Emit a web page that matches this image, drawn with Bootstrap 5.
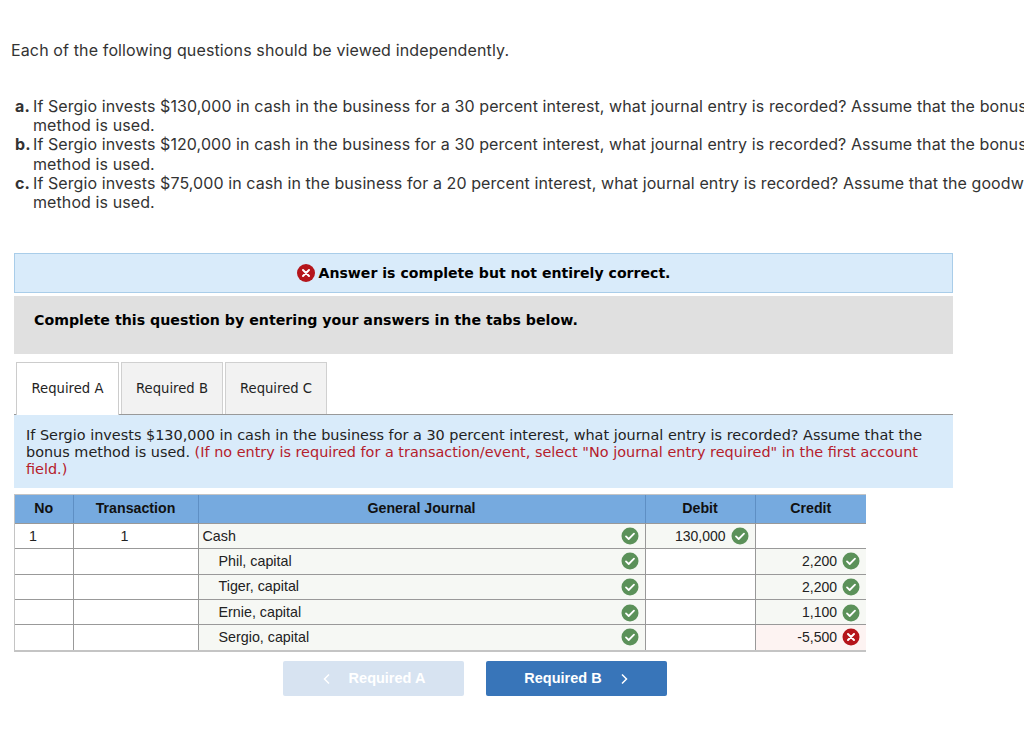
<!DOCTYPE html>
<html lang="en">
<head>
<meta charset="utf-8">
<title>Journal entry question</title>
<link href="https://cdn.jsdelivr.net/npm/bootstrap@5.3.0/dist/css/bootstrap.min.css" rel="stylesheet">
<style>
html,body{width:1024px;height:754px;overflow:hidden;background:#fff}
.page-wrap{width:1024px;height:754px;overflow:hidden;padding:40px 0 0 0}
.lead-line{font-family:Inter,"Open Sans",sans-serif;font-size:16px;line-height:21px;color:#333;margin:0 0 0 11px;letter-spacing:.13px}
.q-list{font-family:Inter,"Open Sans",sans-serif;font-size:16px;line-height:19.2px;color:#333;width:1100px;margin:36px 0 0 15px;letter-spacing:.09px}
.q-item{display:flex}
.q-let{width:18px;flex:none;font-weight:700;text-align:left}
.q-txt{white-space:nowrap}
.sect{width:939px;margin-left:14px}
.ans-alert{height:40px;margin-top:41px;background:#d9ebfa;border:1px solid #a9cde9;font-family:"DejaVu Sans",sans-serif;font-weight:700;font-size:14.1px;color:#000}
.ans-alert svg{margin-right:4px}
.grey-box{height:58px;margin-top:3px;background:#e0e0e0;padding:14px 20px;font-family:"DejaVu Sans",sans-serif;font-weight:700;font-size:14.2px;color:#000;line-height:20px}
.tabs-row{margin-top:8px;height:53px;border-bottom:1px solid #999;padding-left:2px;gap:2px}
.tab-item{width:103px;height:52px;background:#f2f2f2;border:1px solid #d0d0d0;border-bottom:0;font-family:"DejaVu Sans",sans-serif;font-size:13.2px;color:#222}
.tab-item.on{background:#fff;height:53px;border-color:#ccc}
.tab-item.w2{width:102px}
.q-panel{height:73px;background:#d9ebfa;padding:12px 12px 0;font-family:"DejaVu Sans",sans-serif;font-size:14.43px;line-height:17px;color:#222}
.q-red{color:#b5202b}
.gj-wrap{width:852px;margin:6px 0 0 14px;border:1px solid #c4c4c4;padding:0}
.gj{width:851px;table-layout:fixed;border-collapse:collapse;margin:0;font-family:"Liberation Sans",sans-serif;font-size:14.3px;color:#222}
.gj th{background:#76aadf;height:28px;padding:0;text-align:center;font-weight:700;font-size:14.2px;color:#111;border-right:1px solid #5e8fc4;border-bottom:1px solid #999;vertical-align:middle}
.gj td{height:25.4px;padding:0 4px;border-right:1px solid #999;border-bottom:1px solid #999;vertical-align:middle;background:#fff;white-space:nowrap}
.gj th:last-child,.gj td:last-child{border-right:0}
.gj tr:last-child td{border-bottom:1px solid #c4c4c4}
.gj td.tint{background:#f6f8f4}
.gj td.bad{background:#fdf3f2}
.gj td.no-cell{padding-left:14px}
.gj td.tx-cell{padding-right:26px;text-align:center}
.gj .lower-row td{padding-top:1px}
.acct-in{display:inline-block;padding-left:16px}
.acct-row{display:flex;justify-content:space-between;align-items:center;padding-right:2px}
.val-cell{display:flex;justify-content:flex-end;align-items:center;gap:5px;padding-right:2px;font-size:14px}
.gj-ico{display:block;flex:none}
.nav-row{margin:9px 0 0 283px;gap:22px}
.nav-b{width:181px;height:35px;border-radius:2px;border:0;font-family:"Liberation Sans",sans-serif;font-weight:700;font-size:14.5px;color:#fff;padding:1px 0 0}
.nav-b.off{background:#d7e3f1}
.nav-b.go{background:#3875b9}
.nav-b svg{display:inline-block}
.gap-off{gap:17px}
.gap-go{gap:17px}
</style>
</head>
<body>
<div class="page-wrap">
  <p class="lead-line">Each of the following questions should be viewed independently.</p>
  <div class="q-list">
    <div class="q-item"><span class="q-let">a.</span><span class="q-txt">If Sergio invests $130,000 in cash in the business for a 30 percent interest, what journal entry is recorded? Assume that the bonus<br>method is used.</span></div>
    <div class="q-item"><span class="q-let">b.</span><span class="q-txt">If Sergio invests $120,000 in cash in the business for a 30 percent interest, what journal entry is recorded? Assume that the bonus<br>method is used.</span></div>
    <div class="q-item"><span class="q-let">c.</span><span class="q-txt">If Sergio invests $75,000 in cash in the business for a 20 percent interest, what journal entry is recorded? Assume that the goodwill<br>method is used.</span></div>
  </div>

  <div class="sect ans-alert d-flex align-items-center justify-content-center">
    <svg width="18" height="18" viewBox="0 0 18 18"><circle cx="9" cy="9" r="9" fill="#b5151b"/><path d="M6 6l6 6M12 6l-6 6" stroke="#fff" stroke-width="2" stroke-linecap="round"/></svg>
    <span>Answer is complete but not entirely correct.</span>
  </div>
  <div class="sect grey-box">Complete this question by entering your answers in the tabs below.</div>

  <div class="sect tabs-row d-flex">
    <div class="tab-item on d-flex align-items-center justify-content-center">Required A</div>
    <div class="tab-item w2 d-flex align-items-center justify-content-center">Required B</div>
    <div class="tab-item w2 d-flex align-items-center justify-content-center">Required C</div>
  </div>
  <div class="sect q-panel">If Sergio invests $130,000 in cash in the business for a 30 percent interest, what journal entry is recorded? Assume that the bonus method is used. <span class="q-red">(If no entry is required for a transaction/event, select "No journal entry required" in the first account field.)</span></div>

  <div class="gj-wrap">
    <table class="gj">
      <colgroup><col style="width:58px"><col style="width:125px"><col style="width:447px"><col style="width:110px"><col style="width:111px"></colgroup>
      <thead><tr><th>No</th><th>Transaction</th><th>General Journal</th><th>Debit</th><th>Credit</th></tr></thead>
      <tbody>
        <tr class="lower-row">
          <td class="no-cell">1</td><td class="tx-cell">1</td>
          <td class="tint"><div class="acct-row"><span>Cash</span><svg class="gj-ico" width="18" height="18" viewBox="0 0 18 18"><circle cx="9" cy="9" r="8.5" fill="#5b9159"/><path d="M5 9.4l2.7 2.6L13 6.6" fill="none" stroke="#fff" stroke-width="1.8" stroke-linecap="round" stroke-linejoin="round"/></svg></div></td>
          <td class="tint"><div class="val-cell">130,000<svg class="gj-ico" width="18" height="18" viewBox="0 0 18 18"><circle cx="9" cy="9" r="8.5" fill="#5b9159"/><path d="M5 9.4l2.7 2.6L13 6.6" fill="none" stroke="#fff" stroke-width="1.8" stroke-linecap="round" stroke-linejoin="round"/></svg></div></td>
          <td></td>
        </tr>
        <tr>
          <td></td><td></td>
          <td class="tint"><div class="acct-row"><span class="acct-in">Phil, capital</span><svg class="gj-ico" width="18" height="18" viewBox="0 0 18 18"><circle cx="9" cy="9" r="8.5" fill="#5b9159"/><path d="M5 9.4l2.7 2.6L13 6.6" fill="none" stroke="#fff" stroke-width="1.8" stroke-linecap="round" stroke-linejoin="round"/></svg></div></td>
          <td></td>
          <td class="tint"><div class="val-cell">2,200<svg class="gj-ico" width="18" height="18" viewBox="0 0 18 18"><circle cx="9" cy="9" r="8.5" fill="#5b9159"/><path d="M5 9.4l2.7 2.6L13 6.6" fill="none" stroke="#fff" stroke-width="1.8" stroke-linecap="round" stroke-linejoin="round"/></svg></div></td>
        </tr>
        <tr class="lower-row">
          <td></td><td></td>
          <td class="tint"><div class="acct-row"><span class="acct-in">Tiger, capital</span><svg class="gj-ico" width="18" height="18" viewBox="0 0 18 18"><circle cx="9" cy="9" r="8.5" fill="#5b9159"/><path d="M5 9.4l2.7 2.6L13 6.6" fill="none" stroke="#fff" stroke-width="1.8" stroke-linecap="round" stroke-linejoin="round"/></svg></div></td>
          <td></td>
          <td class="tint"><div class="val-cell">2,200<svg class="gj-ico" width="18" height="18" viewBox="0 0 18 18"><circle cx="9" cy="9" r="8.5" fill="#5b9159"/><path d="M5 9.4l2.7 2.6L13 6.6" fill="none" stroke="#fff" stroke-width="1.8" stroke-linecap="round" stroke-linejoin="round"/></svg></div></td>
        </tr>
        <tr class="lower-row">
          <td></td><td></td>
          <td class="tint"><div class="acct-row"><span class="acct-in">Ernie, capital</span><svg class="gj-ico" width="18" height="18" viewBox="0 0 18 18"><circle cx="9" cy="9" r="8.5" fill="#5b9159"/><path d="M5 9.4l2.7 2.6L13 6.6" fill="none" stroke="#fff" stroke-width="1.8" stroke-linecap="round" stroke-linejoin="round"/></svg></div></td>
          <td></td>
          <td class="tint"><div class="val-cell">1,100<svg class="gj-ico" width="18" height="18" viewBox="0 0 18 18"><circle cx="9" cy="9" r="8.5" fill="#5b9159"/><path d="M5 9.4l2.7 2.6L13 6.6" fill="none" stroke="#fff" stroke-width="1.8" stroke-linecap="round" stroke-linejoin="round"/></svg></div></td>
        </tr>
        <tr>
          <td></td><td></td>
          <td class="tint"><div class="acct-row"><span class="acct-in">Sergio, capital</span><svg class="gj-ico" width="18" height="18" viewBox="0 0 18 18"><circle cx="9" cy="9" r="8.5" fill="#5b9159"/><path d="M5 9.4l2.7 2.6L13 6.6" fill="none" stroke="#fff" stroke-width="1.8" stroke-linecap="round" stroke-linejoin="round"/></svg></div></td>
          <td></td>
          <td class="bad"><div class="val-cell">-5,500<svg class="gj-ico" width="18" height="18" viewBox="0 0 18 18"><circle cx="9" cy="9" r="8.5" fill="#b5151b"/><path d="M6 6l6 6M12 6l-6 6" stroke="#fff" stroke-width="2" stroke-linecap="round"/></svg></div></td>
        </tr>
      </tbody>
    </table>
  </div>

  <div class="nav-row d-flex">
    <button type="button" class="nav-b off gap-off d-flex align-items-center justify-content-center"><svg width="10" height="12" viewBox="0 0 10 12"><path d="M7 1.5L2.5 6 7 10.500" fill="none" stroke="#fff" stroke-width="1.5"/></svg><span>Required A</span></button>
    <button type="button" class="nav-b go gap-go d-flex align-items-center justify-content-center"><span>Required B</span><svg width="10" height="12" viewBox="0 0 10 12"><path d="M3 1.500L7.500 6 3 10.500" fill="none" stroke="#fff" stroke-width="1.5"/></svg></button>
  </div>
</div>
<script src="https://cdn.jsdelivr.net/npm/bootstrap@5.3.0/dist/js/bootstrap.bundle.min.js"></script>
</body>
</html>
